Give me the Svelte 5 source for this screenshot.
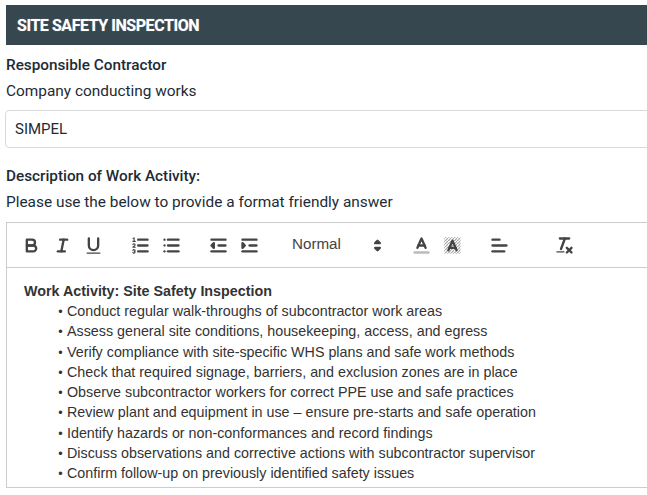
<script>
  const items = [
    'Conduct regular walk-throughs of subcontractor work areas',
    'Assess general site conditions, housekeeping, access, and egress',
    'Verify compliance with site-specific WHS plans and safe work methods',
    'Check that required signage, barriers, and exclusion zones are in place',
    'Observe subcontractor workers for correct PPE use and safe practices',
    'Review plant and equipment in use – ensure pre-starts and safe operation',
    'Identify hazards or non-conformances and record findings',
    'Discuss observations and corrective actions with subcontractor supervisor',
    'Confirm follow-up on previously identified safety issues'
  ]
</script>

<div class="page">
  <div class="section-header">SITE SAFETY INSPECTION</div>

  <div class="field">
    <div class="label">Responsible Contractor</div>
    <div class="hint">Company conducting works</div>
    <div class="input">SIMPEL</div>
  </div>

  <div class="field second">
    <div class="label">Description of Work Activity:</div>
    <div class="hint">Please use the below to provide a format friendly answer</div>

    <div class="toolbar">
      <span class="group">
        <button aria-label="Bold"><svg viewBox="0 0 18 18"><path class="st" d="M5,4H9.5A2.5,2.5,0,0,1,12,6.5v0A2.5,2.5,0,0,1,9.5,9H5V4Z"/><path class="st" d="M5,9h5.5A2.5,2.5,0,0,1,13,11.5v0A2.5,2.5,0,0,1,10.5,14H5V9Z"/></svg></button>
        <button aria-label="Italic"><svg viewBox="0 0 18 18"><line class="st" x1="7" x2="13" y1="4" y2="4"/><line class="st" x1="5" x2="11" y1="14" y2="14"/><line class="st" x1="8" x2="10" y1="14" y2="4"/></svg></button>
        <button aria-label="Underline"><svg viewBox="0 0 18 18"><path class="st" d="M5,3V9a4.012,4.012,0,0,0,4,4H9a4.012,4.012,0,0,0,4-4V3"/><rect class="fl" height="1" rx="0.5" ry="0.5" width="12" x="3" y="15"/></svg></button>
      </span>
      <span class="group">
        <button aria-label="Ordered list"><svg viewBox="0 0 18 18"><line class="st" x1="7" x2="15" y1="4" y2="4"/><line class="st" x1="7" x2="15" y1="9" y2="9"/><line class="st" x1="7" x2="15" y1="14" y2="14"/><line class="st thin" x1="2.5" x2="4.5" y1="5.5" y2="5.5"/><path class="fl" d="M3.5,6A0.5,0.5,0,0,1,3,5.5V3.085l-0.276.138A0.5,0.5,0,0,1,2.053,3c-0.124-.247-0.023-0.324.224-0.447l1-.5A0.5,0.5,0,0,1,4,2.5v3A0.5,0.5,0,0,1,3.5,6Z"/><path class="st thin" d="M4.5,10.5h-2c0-.234,1.85-1.076,1.85-2.234A0.959,0.959,0,0,0,2.5,8.156"/><path class="st thin" d="M2.5,14.846a0.959,0.959,0,0,0,1.85-.109A0.7,0.7,0,0,0,3.75,14a0.688,0.688,0,0,0,.6-0.736,0.959,0.959,0,0,0-1.85-.109"/></svg></button>
        <button aria-label="Bullet list"><svg viewBox="0 0 18 18"><line class="st" x1="6" x2="15" y1="4" y2="4"/><line class="st" x1="6" x2="15" y1="9" y2="9"/><line class="st" x1="6" x2="15" y1="14" y2="14"/><line class="st" x1="3" x2="3" y1="4" y2="4"/><line class="st" x1="3" x2="3" y1="9" y2="9"/><line class="st" x1="3" x2="3" y1="14" y2="14"/></svg></button>
      </span>
      <span class="group">
        <button aria-label="Outdent"><svg viewBox="0 0 18 18"><line class="st" x1="3" x2="15" y1="14" y2="14"/><line class="st" x1="3" x2="15" y1="4" y2="4"/><line class="st" x1="9" x2="15" y1="9" y2="9"/><polygon class="st fl" points="5 7 5 11 3 9 5 7"/></svg></button>
        <button aria-label="Indent"><svg viewBox="0 0 18 18"><line class="st" x1="3" x2="15" y1="14" y2="14"/><line class="st" x1="3" x2="15" y1="4" y2="4"/><line class="st" x1="9" x2="15" y1="9" y2="9"/><polygon class="st fl" points="3 7 3 11 5 9 3 7"/></svg></button>
      </span>
      <span class="group">
        <span class="picker">
          <span class="picker-label">Normal</span>
          <svg viewBox="0 0 18 18"><polygon class="st fl" points="7 11 9 13 11 11 7 11"/><polygon class="st fl" points="7 7 9 5 11 7 7 7"/></svg>
        </span>
      </span>
      <span class="group">
        <button aria-label="Text colour"><svg viewBox="0 0 18 18"><line class="st label-line" x1="3" x2="15" y1="15" y2="15"/><polyline class="st" points="5.5 11 9 3 12.5 11"/><line class="st" x1="11.63" x2="6.38" y1="9" y2="9"/></svg></button>
        <button aria-label="Background colour"><svg viewBox="0 0 18 18"><defs><pattern id="hatch" width="2.6" height="2.6" patternUnits="userSpaceOnUse"><path class="hatch" d="M0 2.6 2.6 0" /></pattern></defs><rect x="2" y="2" width="14" height="14" fill="url(#hatch)"/><polyline class="st" points="5.5 13 9 5 12.5 13"/><line class="st" x1="11.63" x2="6.38" y1="11" y2="11"/></svg></button>
      </span>
      <span class="group">
        <button class="wide" aria-label="Align"><svg viewBox="0 0 18 18"><line class="st" x1="3" x2="15" y1="9" y2="9"/><line class="st" x1="3" x2="13" y1="14" y2="14"/><line class="st" x1="3" x2="9" y1="4" y2="4"/></svg></button>
      </span>
      <span class="group">
        <button aria-label="Clear formatting"><svg viewBox="0 0 18 18"><line class="st" x1="5" x2="13" y1="3" y2="3"/><line class="st" x1="6" x2="9.35" y1="12" y2="3"/><line class="st" x1="11" x2="15" y1="11" y2="15"/><line class="st" x1="15" x2="11" y1="11" y2="15"/><rect class="fl" height="1" rx="0.5" ry="0.5" width="7" x="2" y="14"/></svg></button>
      </span>
    </div>

    <div class="editor">
      <p><strong>Work Activity: Site Safety Inspection</strong></p>
      <ul>
        {#each items as item}
          <li>{item}</li>
        {/each}
      </ul>
    </div>
  </div>
</div>

<style>
  :global(body) {
    margin: 0;
    background: #fff;
    overflow: hidden;
  }

  .page {
    width: 680px;
    padding: 5px 0 0 6px;
    font-family: Roboto, sans-serif;
    color: #1c2b36;
  }

  .section-header {
    height: 40px;
    line-height: 41px;
    padding-left: 11px;
    background: #37474f;
    color: #fff;
    font-size: 16px;
    font-weight: 700;
    letter-spacing: -0.45px;
    text-shadow: 0 0 1px rgba(255, 255, 255, 0.5);
  }

  .field {
    padding-top: 10px;
  }

  .field.second {
    padding-top: 18px;
  }

  .label {
    font-size: 15.3px;
    font-weight: 500;
    line-height: 20px;
  }

  .hint {
    margin-top: 6px;
    font-size: 15.4px;
    line-height: 20px;
  }

  .input {
    margin: 9px 0 0 -1px;
    height: 38px;
    box-sizing: border-box;
    padding-left: 9px;
    line-height: 36px;
    font-size: 15px;
    border: 1px solid #d9d9d9;
    border-radius: 4px;
  }

  .toolbar {
    margin-top: 10px;
    height: 46px;
    box-sizing: border-box;
    display: flex;
    align-items: center;
    padding-left: 9px;
    border: 1px solid #ccc;
  }

  .group {
    display: flex;
    align-items: center;
    margin-right: 16px;
  }

  button {
    width: 31px;
    height: 26px;
    padding: 0;
    border: none;
    background: none;
    display: flex;
    align-items: center;
    justify-content: center;
  }

  button.wide {
    width: 49.5px;
    padding-right: 18.5px;
  }

  svg {
    width: 21px;
    height: 21px;
  }

  .st {
    fill: none;
    stroke: #444;
    stroke-width: 2;
    stroke-linecap: round;
    stroke-linejoin: round;
  }

  .st.thin {
    stroke-width: 1;
  }

  .fl {
    fill: #444;
  }

  .st.label-line {
    stroke: #bbb;
    stroke-width: 2;
  }

  .hatch {
    stroke: #888;
    stroke-width: 0.8;
  }

  .picker {
    width: 108.5px;
    padding: 0 1.5px 0 11px;
    box-sizing: border-box;
    display: flex;
    align-items: center;
    justify-content: space-between;
    font-family: "Liberation Sans", sans-serif;
    font-size: 15.2px;
    color: #444;
  }

  .picker-label {
    margin-bottom: 3px;
  }

  .editor {
    height: 220px;
    box-sizing: border-box;
    padding: 12.7px 17px 0;
    border: 1px solid #ccc;
    border-top: none;
    font-family: "Liberation Sans", sans-serif;
    font-size: 14.3px;
    line-height: 20.3px;
    color: #333;
  }

  p {
    margin: 0;
  }

  ul {
    margin: 0;
    padding: 0 0 0 43px;
    list-style: none;
  }

  li {
    white-space: nowrap;
  }

  li::before {
    content: '•';
    display: inline-block;
    width: 7px;
    margin-left: -10px;
    margin-right: 3px;
    font-size: 12.5px;
    line-height: 1;
    text-align: center;
  }
</style>
